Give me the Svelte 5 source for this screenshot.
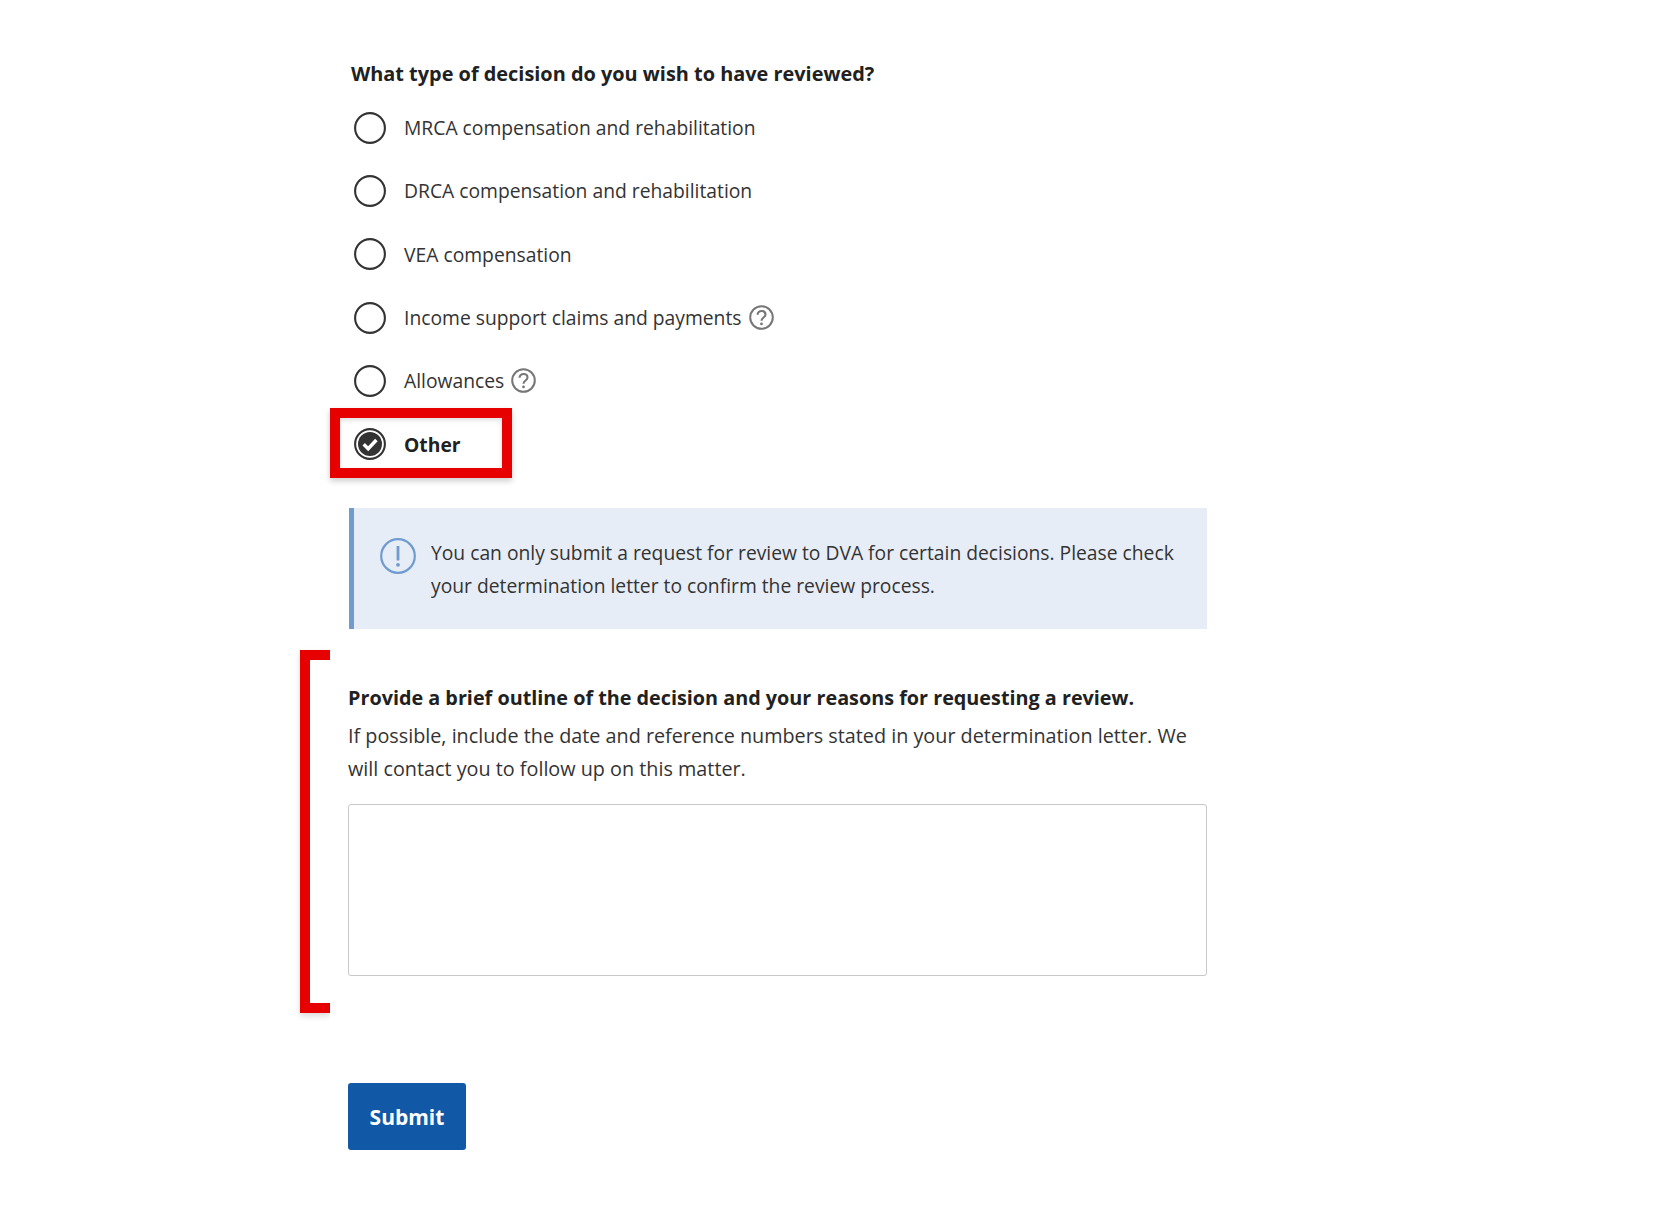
<script>
	const options = [
		{ label: 'MRCA compensation and rehabilitation' },
		{ label: 'DRCA compensation and rehabilitation' },
		{ label: 'VEA compensation' },
		{ label: 'Income support claims and payments', help: true },
		{ label: 'Allowances', help: true },
		{ label: 'Other' }
	];

	let selected = $state('Other');
	let outline = $state('');
</script>

<main>
	<h2 class="question">What type of decision do you wish to have reviewed?</h2>

	<div class="options">
		{#each options as option}
			<label class="option" class:checked={selected === option.label}>
				<input type="radio" name="decision" value={option.label} bind:group={selected} />
				<svg class="radio" viewBox="0 0 32 32" width="32" height="32" aria-hidden="true">
					<circle cx="16" cy="16" r="14.9" fill="none" stroke="#333" stroke-width="2.1" />
					{#if selected === option.label}
						<circle cx="16" cy="16" r="12" fill="#333" />
						<path d="M9.7 16.2l4.5 4.5 8.2-8.7" fill="none" stroke="#fff" stroke-width="3.4" />
					{/if}
				</svg>
				<span class="text">{option.label}</span>
				{#if option.help}
					<svg class="help" viewBox="0 0 25 25" width="25" height="25" aria-hidden="true">
						<circle cx="12.5" cy="12.5" r="11.3" fill="none" stroke="#777" stroke-width="2" />
						<path d="M8.6 9.8c0-2.4 1.7-3.8 4-3.8s3.9 1.4 3.9 3.5c0 3-4 3-4 6.2" fill="none" stroke="#777" stroke-width="2.1" />
						<circle cx="12.5" cy="18.9" r="1.4" fill="#777" />
					</svg>
				{/if}
				{#if option.label === 'Other'}
					<span class="highlight"></span>
				{/if}
			</label>
		{/each}
	</div>

	<div class="notice">
		<svg class="notice-icon" viewBox="0 0 36 36" width="36" height="36" aria-hidden="true">
			<circle cx="18" cy="18" r="16.8" fill="none" stroke="#6f9bd1" stroke-width="2.2" />
			<path d="M18 8v14.5" stroke="#6f9bd1" stroke-width="2.8" />
			<circle cx="18" cy="26.8" r="1.9" fill="#6f9bd1" />
		</svg>
		<p>You can only submit a request for review to DVA for certain decisions. Please check your determination letter to confirm the review process.</p>
	</div>

	<section class="details">
		<span class="bracket"></span>
		<h3>Provide a brief outline of the decision and your reasons for requesting a review.</h3>
		<p>If possible, include the date and reference numbers stated in your determination letter. We will contact you to follow up on this matter.</p>
		<textarea bind:value={outline}></textarea>
	</section>

	<button class="submit">Submit</button>
</main>

<style>
	:global(body) {
		background: #fff;
		color: #212121;
		font-family: "Open Sans", "Noto Sans", sans-serif;
	}

	main {
		width: 859px;
		margin-left: 348px;
		padding: 60px 0 83px;
	}

	.question {
		margin: 0 0 0 3px;
		font-size: 19.9px;
		line-height: 28px;
		font-weight: 700;
	}

	.options {
		display: flex;
		flex-direction: column;
		margin: 8px 0 0 6px;
	}

	.option {
		position: relative;
		display: flex;
		align-items: center;
		height: 63.3px;
		color: #333;
		font-size: 19.3px;
	}

	.option input {
		position: absolute;
		opacity: 0;
		width: 32px;
		height: 32px;
		margin: 0;
	}

	.radio {
		flex: none;
		margin-right: 18px;
	}

	.checked .text {
		font-weight: 700;
		color: #212121;
	}

	.help {
		flex: none;
		margin-left: 7px;
	}

	/* annotation over the selected option */
	.highlight {
		position: absolute;
		left: -24px;
		top: -4px;
		width: 182px;
		height: 70px;
		box-sizing: border-box;
		border: 10px solid #e60000;
		box-shadow: 0 3px 6px rgba(0, 0, 0, 0.2), inset 0 2px 5px rgba(0, 0, 0, 0.14);
		pointer-events: none;
	}

	.notice {
		display: flex;
		gap: 15px;
		margin: 32px 0 0 1px;
		padding: 28px 26px 11px 26px;
		background: #e7edf6;
		border-left: 5px solid #6f9bd1;
		height: 82px;
	}

	.notice-icon {
		flex: none;
		margin-top: 2px;
	}

	.notice p {
		margin: 0;
		font-size: 19.28px;
		line-height: 33px;
		color: #333;
	}

	.details {
		position: relative;
		margin-top: 21px;
		padding-top: 34px;
	}

	.bracket {
		position: absolute;
		left: -48px;
		top: 0;
		width: 30px;
		height: 363px;
		box-sizing: border-box;
		border: 10px solid #e60000;
		border-right: 0;
		box-shadow: 0 3px 6px rgba(0, 0, 0, 0.15);
		clip-path: inset(-10px 0 -10px -10px);
	}

	.details h3 {
		margin: 0;
		font-size: 19.8px;
		line-height: 28px;
		font-weight: 700;
	}

	.details p {
		margin: 7px 0 0;
		font-size: 19.8px;
		line-height: 33px;
		color: #333;
	}

	textarea {
		display: block;
		box-sizing: border-box;
		width: 100%;
		height: 172px;
		margin-top: 19px;
		border: 1px solid #c8c8c8;
		border-radius: 3px;
		resize: none;
		outline: none;
	}

	.submit {
		display: block;
		width: 118px;
		height: 67px;
		margin-top: 107px;
		padding: 2px 0 0;
		border: 0;
		border-radius: 3px;
		background: #1158a7;
		color: #fff;
		font-family: inherit;
		font-size: 21px;
		font-weight: 700;
	}
</style>
